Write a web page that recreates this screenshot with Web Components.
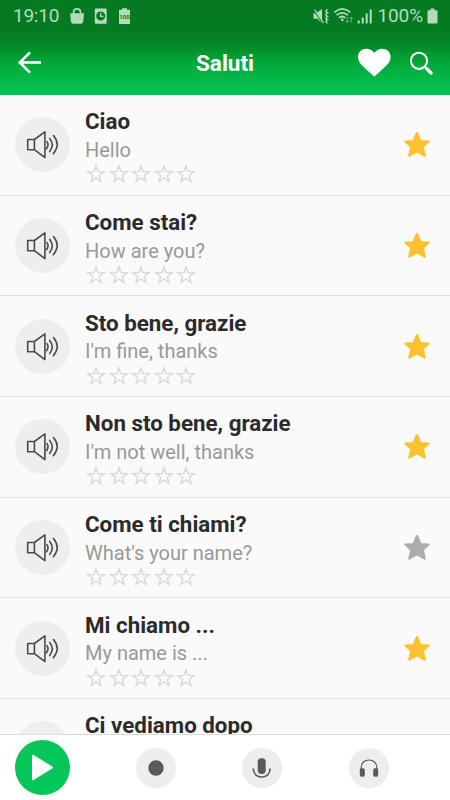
<!DOCTYPE html>
<html lang="it">
<head>
<meta charset="utf-8">
<title>Saluti</title>
<style>
html,body{margin:0;height:100%}
body{font-family:Roboto,sans-serif;background:#fafafa;overflow:hidden}
</style>
</head>
<body>
<phrase-app></phrase-app>
<script>
const define = (name, html, setup) => customElements.define(name, class extends HTMLElement {
  connectedCallback() {
    if (this.shadowRoot) return;
    const t = document.createElement('template');
    t.innerHTML = html;
    this.attachShadow({mode: 'open'}).append(t.content.cloneNode(true));
    if (setup) setup(this, this.shadowRoot);
  }
});

define('status-bar', `
<style>
:host{display:flex;height:31px;box-sizing:border-box;padding:0 12px 0 13px;align-items:center;justify-content:space-between;color:#b5dbbd;font-size:19px;line-height:31px}
div{display:flex;align-items:center}
svg{display:block;fill:currentColor}
.t{letter-spacing:-.25px;width:57px}
.p{letter-spacing:-.1px;margin-right:4px}
</style>
<div><span class="t">19:10</span>
<svg width="62" height="18" viewBox="70 6 62 18">
<path d="M70.2 12.3H84L83.2 20.500Q82.800 22.700 80.500 22.700H73.500Q71.300 22.700 70.900 20.500Z"/>
<path d="M73.600 13V11Q73.600 7.800 77 7.800T80.500 11V13" fill="none" stroke="currentColor" stroke-width="1.700"/>
<path fill-rule="evenodd" d="M96 7.500H105.500Q106.700 7.500 106.700 8.700V21.500Q106.700 22.700 105.500 22.700H96Q94.800 22.700 94.800 21.500V8.700Q94.800 7.500 96 7.500ZM100.700 10.500A4.500 4.500 0 1 0 100.710 10.500Z"/>
<path d="M100.700 12V15.300H103.500" fill="none" stroke="currentColor" stroke-width="1.300"/>
<path d="M122 7.200H127V8.700H130V23H119V8.700H122Z"/>
<text x="124.500" y="18.200" font-size="6" font-weight="700" text-anchor="middle" fill="#057a22">100</text>
</svg></div>
<div><svg width="62" height="18" viewBox="312 6 62 18" style="margin-right:3px">
<path d="M313.500 12.300H316L322 8V21.800L317 17.800H313.500Z"/>
<path d="M313.500 9L322.500 22" stroke="#057a22" stroke-width="1.200"/><path d="M314.700 8.500L323.500 21.800" stroke="currentColor" stroke-width="1.200"/>
<path d="M327.500 8.500q-3 1.800 0 3.400q-3 1.800 0 3.400q-3 1.800 0 3.400q-3 1.800 0 3.400" fill="none" stroke="currentColor" stroke-width="1.500"/>
<g fill="none" stroke="currentColor" stroke-width="1.700"><path d="M334.300 11.300Q342.300 4.600 350.300 11.300M336.600 14.100Q342.300 9.500 348 14.100M339 16.800Q342.300 14.200 345.300 16.800"/></g><circle cx="342.300" cy="18.800" r="1.400"/>
<path d="M347.300 16V21.500M345.700 19.800l1.600 1.700 1.600-1.700M351.300 21.500V16M349.700 17.700l1.600-1.700 1.600 1.700" fill="none" stroke="currentColor" stroke-width=".9" opacity=".65"/>
<path d="M357.700 19.500h2V22.600h-2ZM361.700 16.500h2V22.600h-2ZM365.700 12.500h2V22.600h-2ZM369.700 8.500h2V22.600h-2Z"/>
</svg><span class="p">100%</span>
<svg width="11" height="16" viewBox="0 0 11 16"><path d="M3.500.5H7.500V2.200H9.500Q10.500 2.200 10.500 3.200V14.500Q10.500 15.500 9.500 15.500H1.500Q.5 15.500.5 14.500V3.200Q.5 2.200 1.500 2.200H3.500Z"/></svg></div>`);

define('app-header', `
<style>
:host{display:block;height:95px;flex:none;background:linear-gradient(#057a22 0,#057a22 30px,#018625 44px,#03ab3b 65px,#04c454 94px,#04c454)}
.bar{display:grid;grid-template-columns:1fr auto 1fr;height:64px;align-items:center;padding:0 17px 0 17px}
h1{margin:0;color:#fff;font-size:22.500px;font-weight:700;line-height:28px}
.r{display:flex;justify-content:flex-end;align-items:center;gap:18px}
svg{display:block}
</style>
<status-bar></status-bar>
<div class="bar">
<svg width="26" height="26" viewBox="0 0 26 26" fill="none" stroke="#fff" stroke-width="2.600"><path d="M24 12.500H3M13 2.300L2.800 12.500 13 22.700"/></svg>
<h1>Saluti</h1>
<div class="r">
<svg width="34" height="30" viewBox="0 0 34 30" fill="#fff"><path transform="translate(.3 0)" d="M17 28.700L14.600 26.500C6 18.700.7 14.800.7 9.200.7 4.300 4.400.8 9.100.8 12.300.8 15.300 2.500 17 5 18.700 2.500 21.700.8 24.900.8 29.600.8 33.300 4.300 33.300 9.200 33.300 14.800 28 18.700 19.400 26.500Z"/></svg>
<svg width="24" height="26" viewBox="0 0 24 26" fill="none" stroke="#fff"><circle cx="10" cy="10.800" r="8.100" stroke-width="2"/><path d="M15.800 16.700L17.500 18.400" stroke-width="2"/><path d="M17.500 18.500L22 23" stroke-width="3.200" stroke-linecap="round"/></svg>
</div></div>`);

define('star-rating', `
<style>:host{display:flex;gap:2.500px}svg{display:block;width:20px;height:20px;fill:none;stroke:#dadada;stroke-width:1.500}</style>`,
(el, root) => {
  for (let i = 0; i < 5; i++) root.innerHTML += '<svg viewBox="0 0 20 20"><path d="M10 1.900L12 7.600 18.100 7.800 13.300 11.500 15 17.500 10 14 5 17.500 6.700 11.500 1.900 7.800 8 7.600Z"/></svg>';
});

define('sound-button', `
<style>:host{display:block;width:55px;height:55px;border-radius:50%;background:#eee}svg{display:block}</style>
<svg width="55" height="55" viewBox="0 0 55 55" fill="none" stroke="#4a4a4a" stroke-width="1.600" stroke-linejoin="round" stroke-linecap="round">
<path d="M12.700 22.500H19.400V32.700H12.700ZM19.400 22.500L29.900 14.900V40.600L19.400 32.700"/>
<path d="M32 24.700Q34.300 27.700 31.500 31.700M34.700 21.400Q39.800 27.500 34.700 34.500M38.500 18.500Q46 27.500 38.300 36.700"/></svg>`);

define('phrase-row', `
<style>
:host{display:grid;grid-template-columns:55px 1fr auto;column-gap:15px;align-items:center;height:100.650px;flex:none;box-sizing:border-box;padding:0 18px 0 15px;border-bottom:1px solid #e2e2e2;color:#2b2b2b}
.x{padding-top:2px;white-space:nowrap}
.a{font-weight:700;font-size:22.350px;line-height:28px}
.b{font-size:20px;line-height:28px;margin-top:.7px;color:#999}
star-rating{margin:.3px 0 0 1px}
svg{display:block;fill:#fdc02f;margin-top:1px}
:host([off]) svg{fill:#adadad}
</style>
<sound-button></sound-button>
<div class="x"><div class="a"><slot></slot></div><div class="b"><slot name="translation"></slot></div><star-rating></star-rating></div>
<svg width="30" height="30" viewBox="0 0 30 30"><path d="M15 2Q15.900 2 16.400 3.200L19.300 10.200 26.800 10.600Q28.600 10.900 27.400 12.300L21.900 17.300 23.800 25.200Q23.900 27.300 22 26.500L15 22.600 8 26.500Q6.100 27.300 6.200 25.200L8.100 17.300 2.600 12.300Q1.400 10.900 3.200 10.600L10.700 10.200 13.600 3.200Q14.100 2 15 2Z"/></svg>`);

define('round-button', `
<style>:host{display:grid;place-items:center;width:40px;height:40px;border-radius:50%;background:#ededed}</style><slot></slot>`);

define('player-bar', `
<style>
:host{display:block;flex:none;height:66px;box-sizing:border-box;border-top:1px solid #ddd;background:#fff}
nav{display:flex;align-items:center;height:65px;padding-left:15px}
.play{width:55px;height:55px;background:#05c658}
round-button{margin-right:66.200px}
svg{display:block}
</style>
<nav><round-button class="play"><svg width="55" height="55" viewBox="0 0 55 55"><path d="M18 15.800L37 27.500 18 39.200Z" fill="#fff" stroke="#fff" stroke-width="2" stroke-linejoin="round"/></svg></round-button>
<round-button><svg width="40" height="40"><circle cx="20" cy="20" r="7.700" fill="#595959"/></svg></round-button>
<round-button><svg width="40" height="40"><rect x="15.700" y="10.300" width="8" height="15.600" rx="3.700" fill="#595959"/><path d="M11.300 20.500C11.500 26 15 29 19.700 29S27.900 26 28.100 20.500" fill="none" stroke="#595959" stroke-width="1.700"/></svg></round-button>
<round-button><svg width="40" height="40"><path d="M12.200 22V19.500C12.200 14.800 15.600 12 20 12S27.800 14.800 27.800 19.500V22" fill="none" stroke="#595959" stroke-width="1.200"/><rect x="10.800" y="20.300" width="5" height="8.500" rx="1.700" fill="#595959"/><rect x="24.200" y="20.300" width="5" height="8.500" rx="1.700" fill="#595959"/></svg></round-button></nav>`);

define('phrase-app', `
<style>
:host{display:flex;flex-direction:column;height:800px;width:450px}
main{flex:1;min-height:0;overflow:hidden;background:#fafafa;display:flex;flex-direction:column}
</style>
<app-header></app-header><main></main><player-bar></player-bar>`,
(el, root) => {
  const list = [['Ciao','Hello'],['Come stai?','How are you?'],['Sto bene, grazie',"I'm fine, thanks"],['Non sto bene, grazie',"I'm not well, thanks"],['Come ti chiami?',"What's your name?",1],['Mi chiamo ...','My name is ...'],['Ci vediamo dopo','']];
  root.querySelector('main').innerHTML = list.map(([a, b, off]) => `<phrase-row${off ? ' off' : ''}>${a}<span slot="translation">${b || '&nbsp;'}</span></phrase-row>`).join('');
});
</script>
</body>
</html>
